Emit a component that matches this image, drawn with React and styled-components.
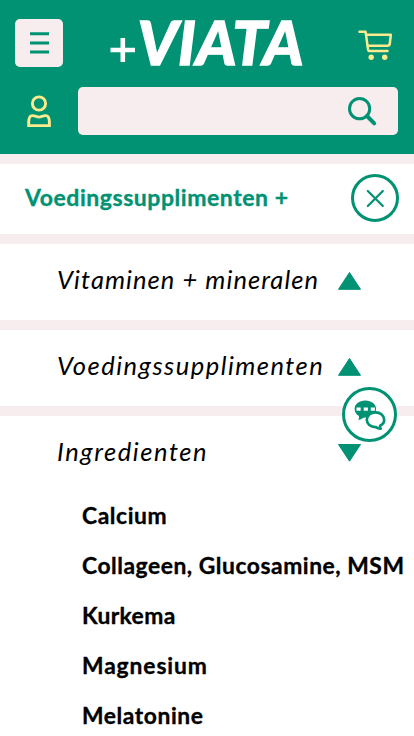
import React from "react";
import styled, { createGlobalStyle } from "styled-components";

const GREEN = "#009273";
const BLUSH = "#f7edee";
const YELLOW = "#fbeb8e";

const GlobalStyle = createGlobalStyle`
  *, *::before, *::after { box-sizing: border-box; }
  html, body { margin: 0; height: 100%; overflow: hidden; background: #fff; }
  button { font: inherit; padding: 0; margin: 0; cursor: pointer; }
  svg { display: block; flex: none; }
`;

const Page = styled.div`
  width: 100%;
  height: 736px;
  overflow: hidden;
  background: #fff;
  color: #000;
  font-family: Lato, "Open Sans", sans-serif;
`;

const Header = styled.header`
  height: 154px;
  padding: 19px 16px 0 15px;
  background: ${GREEN};
`;

const BrandBar = styled.div`
  display: flex;
  align-items: center;
  justify-content: space-between;
  height: 48px;
`;

const MenuButton = styled.button`
  display: grid;
  place-items: center;
  width: 48px;
  height: 48px;
  border: 0;
  border-radius: 5px;
  background: ${BLUSH};
`;

const IconButton = styled.button`
  display: grid;
  place-items: center;
  width: 48px;
  height: 48px;
  border: 0;
  background: none;
`;

const LogoText = styled.text`
  font-family: Lato, sans-serif;
  font-size: 61px;
  font-weight: 900;
  font-style: italic;
  fill: #fff;
  stroke: #fff;
  stroke-width: 1.3px;
`;

const SearchBar = styled.div`
  display: grid;
  grid-template-columns: 48px 320px;
  gap: 15px;
  margin-top: 20px;
`;

const SearchField = styled.div`
  display: flex;
  align-items: center;
  justify-content: flex-end;
  height: 48px;
  padding-right: 20px;
  border-radius: 5px;
  background: ${BLUSH};
`;

const TitleRow = styled.div`
  display: flex;
  align-items: center;
  justify-content: space-between;
  height: 80px;
  padding: 0 15px 2px 25px;
  border-top: 10px solid ${BLUSH};
`;

const Title = styled.h1`
  margin: 0;
  padding-bottom: 2px;
  color: ${GREEN};
  font-size: 23px;
  font-weight: 700;
  -webkit-text-stroke: 0.35px ${GREEN};
  line-height: 28px;
  letter-spacing: ${(p) => p.$spacing}px;
  white-space: nowrap;
`;

const RoundButton = styled.button`
  display: grid;
  place-items: center;
  width: ${(p) => p.$size}px;
  height: ${(p) => p.$size}px;
  border: 3px solid ${GREEN};
  border-radius: 50%;
  background: #fff;
`;

const CategoryRow = styled.div`
  position: relative;
  display: flex;
  align-items: center;
  justify-content: space-between;
  height: 86px;
  padding: 0 52px 2px 57px;
  border-top: 10px solid ${BLUSH};
`;

const CategoryName = styled.span`
  padding-bottom: 5px;
  font-size: 25.5px;
  font-style: italic;
  line-height: 30px;
  letter-spacing: ${(p) => p.$spacing}px;
  white-space: nowrap;
`;

const ChatAnchor = styled.div`
  position: absolute;
  top: -29px;
  right: 17px;
`;

const IngredientList = styled.ul`
  margin: 0;
  padding: 10px 0 0 82px;
  list-style: none;
`;

const Ingredient = styled.li`
  height: 50px;
  font-size: 22.8px;
  font-weight: 700;
  -webkit-text-stroke: 0.35px #000;
  line-height: 27px;
  letter-spacing: ${(p) => p.$spacing}px;
  white-space: nowrap;
`;

const Logo = () => (
  <svg width="196" height="80" viewBox="109 3 196 80" role="img">
    <path d="M110.5 50H135M122.8 38V62" stroke="#fff" strokeWidth="4.6" />
    <LogoText x="137.6" y="64.6" textLength="166" lengthAdjust="spacingAndGlyphs">
      VIATA
    </LogoText>
  </svg>
);

const BarsIcon = () => (
  <svg width="20" height="24" viewBox="0 0 20 24" fill="none" stroke={GREEN} strokeWidth="3">
    <path d="M1 2.8H20M1 12H20M1 21H20" />
  </svg>
);

const CartIcon = () => (
  <svg width="48" height="48" viewBox="350 19 48 48" fill="none" stroke={YELLOW} strokeWidth="2.5" strokeLinecap="round" strokeLinejoin="round">
    <path d="M359.5 31.8H365.6L368 49.2Q368.3 51 370 51H387.5" />
    <path d="M366.2 34.8H390.8L389.8 43.5Q389.5 45.7 387.5 45.7H367.7" />
    <circle cx="371.2" cy="57.3" r="2.7" fill={YELLOW} stroke="none" />
    <circle cx="384.7" cy="57.3" r="2.7" fill={YELLOW} stroke="none" />
  </svg>
);

const UserIcon = () => (
  <svg width="48" height="48" viewBox="15 87 48 48" fill="none" stroke={YELLOW} strokeWidth="2.9">
    <circle cx="39" cy="103.5" r="6.6" />
    <path d="M28.7 125.6V122Q28.9 115.8 32.2 115.6C35 115.4 36.7 117.1 39 117.1S43 115.4 45.8 115.6Q49.2 115.8 49.4 122V125.6Z" />
  </svg>
);

const SearchIcon = () => (
  <svg width="32" height="32" viewBox="346 95 32 32" fill="none" stroke={GREEN} strokeLinecap="round">
    <circle cx="359.6" cy="108.7" r="10.1" strokeWidth="3" />
    <path d="M367 116L374.2 123.3" strokeWidth="4" />
  </svg>
);

const CloseIcon = () => (
  <svg width="20" height="20" viewBox="0 0 20 20" fill="none" stroke={GREEN} strokeWidth="2.2" strokeLinecap="round">
    <path d="M2.8 3L17.8 18M17.8 3L2.8 18" />
  </svg>
);

const Triangle = ({ down }) => (
  <svg width="24" height="18" viewBox="0.5 0 24 18" fill={GREEN} stroke={GREEN} strokeLinejoin="round">
    <path d={down ? "M1 .5H23L12 17.2Z" : "M1 17.3H23L12 .5Z"} />
  </svg>
);

const ChatIcon = () => (
  <svg width="34" height="34" viewBox="352.5 397.5 34 34">
    <path d="M364.8 400C371.2 400 375.6 403.6 375.6 408.4S371.2 417 364.8 417Q362.5 417 361.3 418.2Q360 419.4 357.8 419.2Q358.8 417.8 358.5 415.6C355.7 413.9 354.1 411.4 354.1 408.4C354.1 403.6 358.5 400 364.8 400Z" fill={GREEN} />
    <path d="M375 411.8C370 411.8 366.3 415 366.3 419.3S370 426.6 375 426.6C376.8 427.3 378.6 428.5 380.2 428.2C379.5 427.4 379.4 426.2 379.7 425.3C382.2 424 383.7 421.9 383.7 419.3C383.7 415 380 411.8 375 411.8Z" fill="#fff" stroke={GREEN} strokeWidth="2.7" strokeLinejoin="round" />
    <path d="M356 407H360.2V410.2H356ZM363.2 407H367.4V410.2H363.2ZM370.3 407H374.4V410.2H370.3Z" fill="#fff" />
  </svg>
);

const INGREDIENTS = [
  ["Calcium", 0.6],
  ["Collageen, Glucosamine, MSM", 0.55],
  ["Kurkema", 0.4],
  ["Magnesium", 0.9],
  ["Melatonine", 0.6],
];

export default function App() {
  return (
    <Page>
      <GlobalStyle />
      <Header>
        <BrandBar>
          <MenuButton aria-label="Menu"><BarsIcon /></MenuButton>
          <Logo />
          <IconButton aria-label="Winkelwagen"><CartIcon /></IconButton>
        </BrandBar>
        <SearchBar>
          <IconButton aria-label="Account"><UserIcon /></IconButton>
          <SearchField><SearchIcon /></SearchField>
        </SearchBar>
      </Header>
      <TitleRow>
        <Title $spacing={0.55}>Voedingssupplimenten +</Title>
        <RoundButton $size={48} aria-label="Sluiten"><CloseIcon /></RoundButton>
      </TitleRow>
      <CategoryRow>
        <CategoryName $spacing={1.06}>Vitaminen + mineralen</CategoryName>
        <Triangle />
      </CategoryRow>
      <CategoryRow>
        <CategoryName $spacing={1.49}>Voedingssupplimenten</CategoryName>
        <Triangle />
      </CategoryRow>
      <CategoryRow>
        <CategoryName $spacing={1.56}>Ingredienten</CategoryName>
        <Triangle down />
        <ChatAnchor>
          <RoundButton $size={55} aria-label="Chat"><ChatIcon /></RoundButton>
        </ChatAnchor>
      </CategoryRow>
      <IngredientList>
        {INGREDIENTS.map(([name, spacing]) => (
          <Ingredient key={name} $spacing={spacing}>{name}</Ingredient>
        ))}
      </IngredientList>
    </Page>
  );
}
